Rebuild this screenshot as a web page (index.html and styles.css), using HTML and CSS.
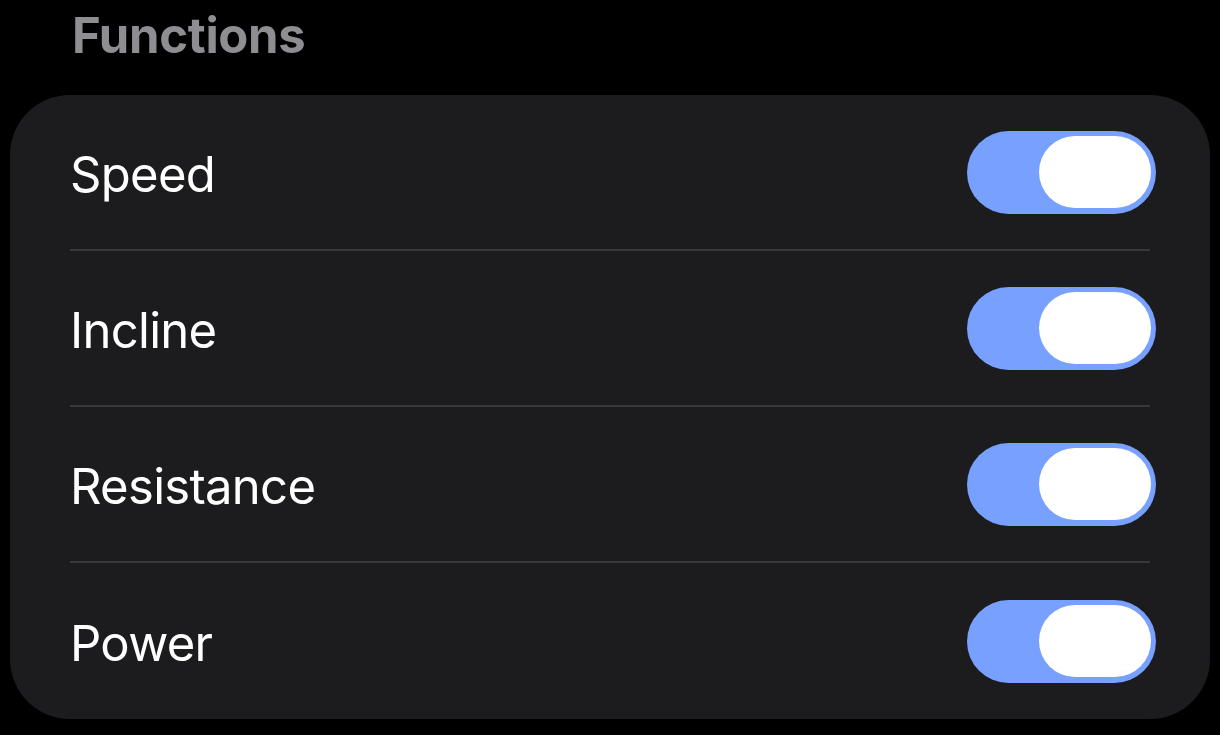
FILE: index.html
```html
<!DOCTYPE html>
<html lang="en">
<head>
    <meta charset="UTF-8">
    <meta name="viewport" content="width=device-width, initial-scale=1.0">
    <title>Functions</title>
    <link rel="stylesheet" href="styles.css">
</head>
<body>
    <h2 class="section-title">Functions</h2>
    <div class="card">
        <div class="row">
            <span class="label">Speed</span>
            <span class="toggle on"><span class="knob"></span></span>
        </div>
        <div class="row">
            <span class="label">Incline</span>
            <span class="toggle on"><span class="knob"></span></span>
        </div>
        <div class="row">
            <span class="label">Resistance</span>
            <span class="toggle on"><span class="knob"></span></span>
        </div>
        <div class="row">
            <span class="label">Power</span>
            <span class="toggle on"><span class="knob"></span></span>
        </div>
    </div>
</body>
</html>
```

FILE: styles.css
```css
body {
    margin: 0;
    height: 100vh;
    background: #000;
    font-family: Inter, "Noto Sans", sans-serif;
    overflow: hidden;
}

.section-title {
    margin: 0;
    padding: 6px 0 0 72px;
    height: 95px;
    box-sizing: border-box;
    font-size: 49px;
    font-weight: 700;
    line-height: 60px;
    color: #8d8d92;
    letter-spacing: -0.3px;
}

.card {
    margin: 0 10px;
    background: #1c1c1e;
    border-radius: 60px;
    padding: 0 60px;
}

.row {
    display: flex;
    align-items: center;
    justify-content: space-between;
    height: 154px;
    border-bottom: 2px solid #38383a;
}

.row:last-child {
    border-bottom: none;
    height: 156px;
}

.label {
    color: #fff;
    font-size: 49px;
    letter-spacing: -0.7px;
    padding-top: 4px;
}

.toggle {
    display: flex;
    align-items: center;
    width: 189px;
    height: 83px;
    border-radius: 42px;
    background: #78a0ff;
    box-sizing: border-box;
    padding: 0 5px;
    margin-right: -6px;
}

.toggle.on {
    justify-content: flex-end;
}

.knob {
    width: 112px;
    height: 72px;
    border-radius: 36px;
    background: #fff;
}
```
